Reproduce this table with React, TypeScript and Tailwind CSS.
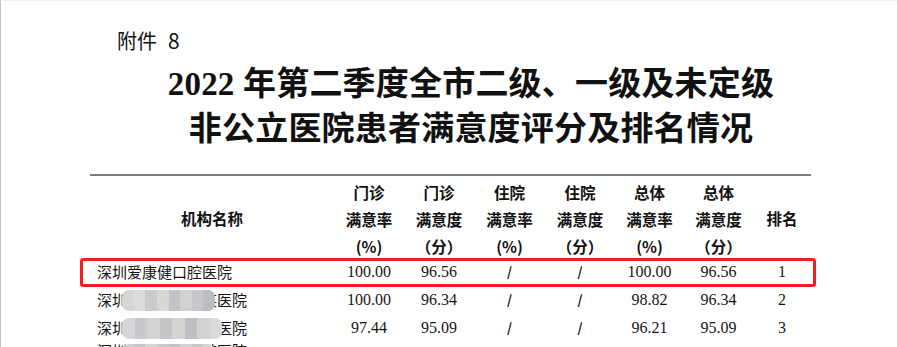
const SERIF = "font-['Liberation_Serif','Noto_Sans_CJK_SC',serif]";

const cols = [
  { top: "门诊", mid: "满意率", unit: "(%)", w: "w-[70px]" },
  { top: "门诊", mid: "满意度", unit: "（分）", w: "w-[70px]" },
  { top: "住院", mid: "满意率", unit: "(%)", w: "w-[71px]" },
  { top: "住院", mid: "满意度", unit: "（分）", w: "w-[70px]" },
  { top: "总体", mid: "满意率", unit: "(%)", w: "w-[69px]" },
  { top: "总体", mid: "满意度", unit: "（分）", w: "w-[69px]" },
];

type Row = { name: string; vals: string[]; rank: string; mosaic?: string[] };

const rows: Row[] = [
  { name: "深圳爱康健口腔医院", vals: ["100.00", "96.56", "/", "/", "100.00", "96.56"], rank: "1" },
  {
    name: "深圳某某某某某某医院",
    vals: ["100.00", "96.34", "/", "/", "98.82", "96.34"],
    rank: "2",
    mosaic: ["#d3d5d8", "#dcdcdc", "#cbcbcd", "#d8d8d5", "#c4c2c4", "#d0d2d4", "#c8c8cc", "#bdbdc1"],
  },
  {
    name: "深圳某某某某某某医院",
    vals: ["97.44", "95.09", "/", "/", "96.21", "95.09"],
    rank: "3",
    mosaic: ["#d5d7da", "#c9c9cb", "#d4d4d6", "#c6c6c8", "#d6d4d0", "#bfbfc3", "#d2d2d0", "#d8dadc"],
  },
];

function Mosaic({ cells, wide }: { cells: string[]; wide?: boolean }) {
  return (
    <div
      className={`absolute top-[-1px] left-[25px] flex h-[21px] overflow-hidden rounded-[7px] ${
        wide ? "w-[100px]" : "w-[93px]"
      }`}
    >
      {cells.map((c, i) => (
        <div key={i} className="h-full flex-1" style={{ backgroundColor: c }} />
      ))}
    </div>
  );
}

function DataRow({ row, idx }: { row: Row; idx: number }) {
  const h = idx === 2 ? "h-[27px]" : "h-[28px]";
  return (
    <div className={`relative flex items-center ${h} text-[#151515]`}>
      {idx === 0 && (
        <div className="absolute -left-[10px] -right-[5px] top-0 -bottom-[1px] rounded-[3px] border-[3px] border-[#f21d1d]" />
      )}
      <div className="w-[244px] pl-[7px]">
        <div className={`relative inline-block text-[15px] leading-[20px] ${SERIF}`}>
          {row.name}
          {row.mosaic && <Mosaic cells={row.mosaic} wide={idx === 2} />}
        </div>
      </div>
      {row.vals.map((v, i) => (
        <div
          key={i}
          className={`${cols[i].w} text-center leading-[20px] ${
            v === "/" ? "font-['Noto_Sans_CJK_SC',sans-serif] text-[13px] font-bold" : `text-[16px] ${SERIF}`
          }`}
        >
          {v}
        </div>
      ))}
      <div className={`flex-1 text-center text-[16px] leading-[20px] ${SERIF}`}>{row.rank}</div>
    </div>
  );
}

export default function App() {
  return (
    <div className="relative h-[347px] w-[897px] overflow-hidden border-l border-t border-l-[#c2c2c2] border-t-[#f0f0f0] bg-white text-[#111]">
      <div className="pl-[116px] pt-[25px] font-['Noto_Sans_CJK_SC',sans-serif] text-[20px] leading-[28px]">
        附件<span className="ml-[11px] text-[21px]">8</span>
      </div>

      <div
        className={`ml-[140px] mt-[7px] w-[660px] text-center text-[33px] font-bold leading-[45px] tracking-[0.2px] ${SERIF}`}
      >
        <div>2022 年第二季度全市二级、一级及未定级</div>
        <div>非公立医院患者满意度评分及排名情况</div>
      </div>

      <div className="ml-[89px] mt-[22px] w-[721px]">
        <div className="h-[2px] bg-[#7d7d7d]" />
        <div className="flex h-[82px] pt-[3px] font-['Noto_Sans_CJK_SC',sans-serif] text-[15.5px] font-bold leading-[27px]">
          <div className="flex w-[244px] items-center justify-center pb-[1px]">机构名称</div>
          {cols.map((c, i) => (
            <div key={i} className={`${c.w} flex flex-col items-center`}>
              <div>{c.top}</div>
              <div>{c.mid}</div>
              <div>{c.unit}</div>
            </div>
          ))}
          <div className="flex flex-1 items-center justify-center pb-[1px]">排名</div>
        </div>
        {rows.map((r, i) => (
          <DataRow key={i} row={r} idx={i} />
        ))}
        <div className="-mt-[2px] h-[20px] pl-[7px]">
          <div className={`relative inline-block text-[15px] leading-[14px] text-[#151515] ${SERIF}`}>
            深圳某某某某某某医院
            <Mosaic cells={["#d0d0d2", "#c8c8cc", "#d6d6d6", "#cbcbcd", "#c4c4c8", "#d2d2d4", "#c9c9cb", "#d5d5d7"]} />
          </div>
        </div>
      </div>
    </div>
  );
}
